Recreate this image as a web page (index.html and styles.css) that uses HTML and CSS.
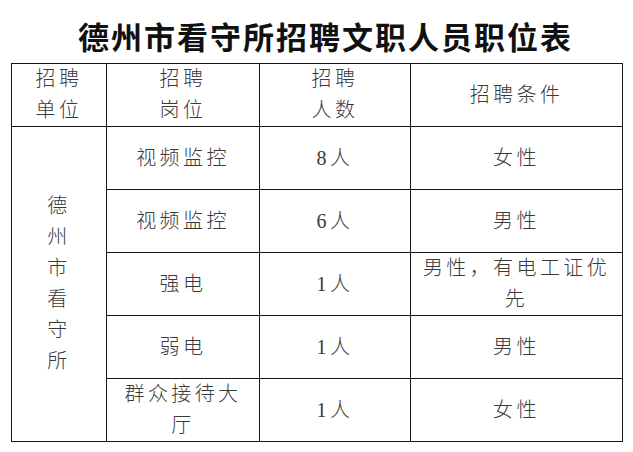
FILE: index.html
```html
<!DOCTYPE html>
<html lang="zh-CN">
<head>
<meta charset="utf-8">
<title>德州市看守所招聘文职人员职位表</title>
<link rel="stylesheet" href="styles.css">
</head>
<body>
<div class="page">
  <h1 class="title">德州市看守所招聘文职人员职位表</h1>
  <table class="jobs">
    <colgroup>
      <col class="c1"><col class="c2"><col class="c3"><col class="c4">
    </colgroup>
    <thead>
      <tr>
        <th>招聘<br>单位</th>
        <th>招聘<br>岗位</th>
        <th>招聘<br>人数</th>
        <th>招聘条件</th>
      </tr>
    </thead>
    <tbody>
      <tr>
        <td rowspan="5"><span class="vertical">德州市看守所</span></td>
        <td>视频监控</td>
        <td>8人</td>
        <td>女性</td>
      </tr>
      <tr>
        <td>视频监控</td>
        <td>6人</td>
        <td>男性</td>
      </tr>
      <tr>
        <td>强电</td>
        <td>1人</td>
        <td>男性，有电工证优先</td>
      </tr>
      <tr>
        <td>弱电</td>
        <td>1人</td>
        <td>男性</td>
      </tr>
      <tr>
        <td>群众接待大厅</td>
        <td>1人</td>
        <td>女性</td>
      </tr>
    </tbody>
  </table>
</div>
</body>
</html>
```
FILE: styles.css
```css
html, body {
  margin: 0;
  padding: 0;
  background: #ffffff;
}

.page {
  padding: 20px 11px 0 11px;
}

.title {
  margin: 0 0 11px 0;
  padding-left: 18px;
  text-align: center;
  font-family: "Noto Sans CJK SC", sans-serif;
  font-weight: 600;
  font-size: 31px;
  line-height: 32px;
  color: #111111;
  letter-spacing: 2px;
}

.jobs {
  border-collapse: collapse;
  width: 611px;
  table-layout: fixed;
  font-family: "Liberation Serif", "Noto Sans CJK SC", serif;
  font-size: 20px;
  font-weight: 300;
  line-height: 31px;
  letter-spacing: 3.4px;
  color: #3a3a3a;
}

.c1 { width: 95px; }
.c2 { width: 153px; }
.c3 { width: 151px; }
.c4 { width: 212px; }

.jobs th,
.jobs td {
  border: 1.5px solid #151515;
  padding: 0 8px;
  text-align: center;
  vertical-align: middle;
  font-weight: 300;
}

.jobs tr {
  height: 63px;
}

.vertical {
  display: inline-block;
  width: 24px;
  line-height: 31px;
}
```
